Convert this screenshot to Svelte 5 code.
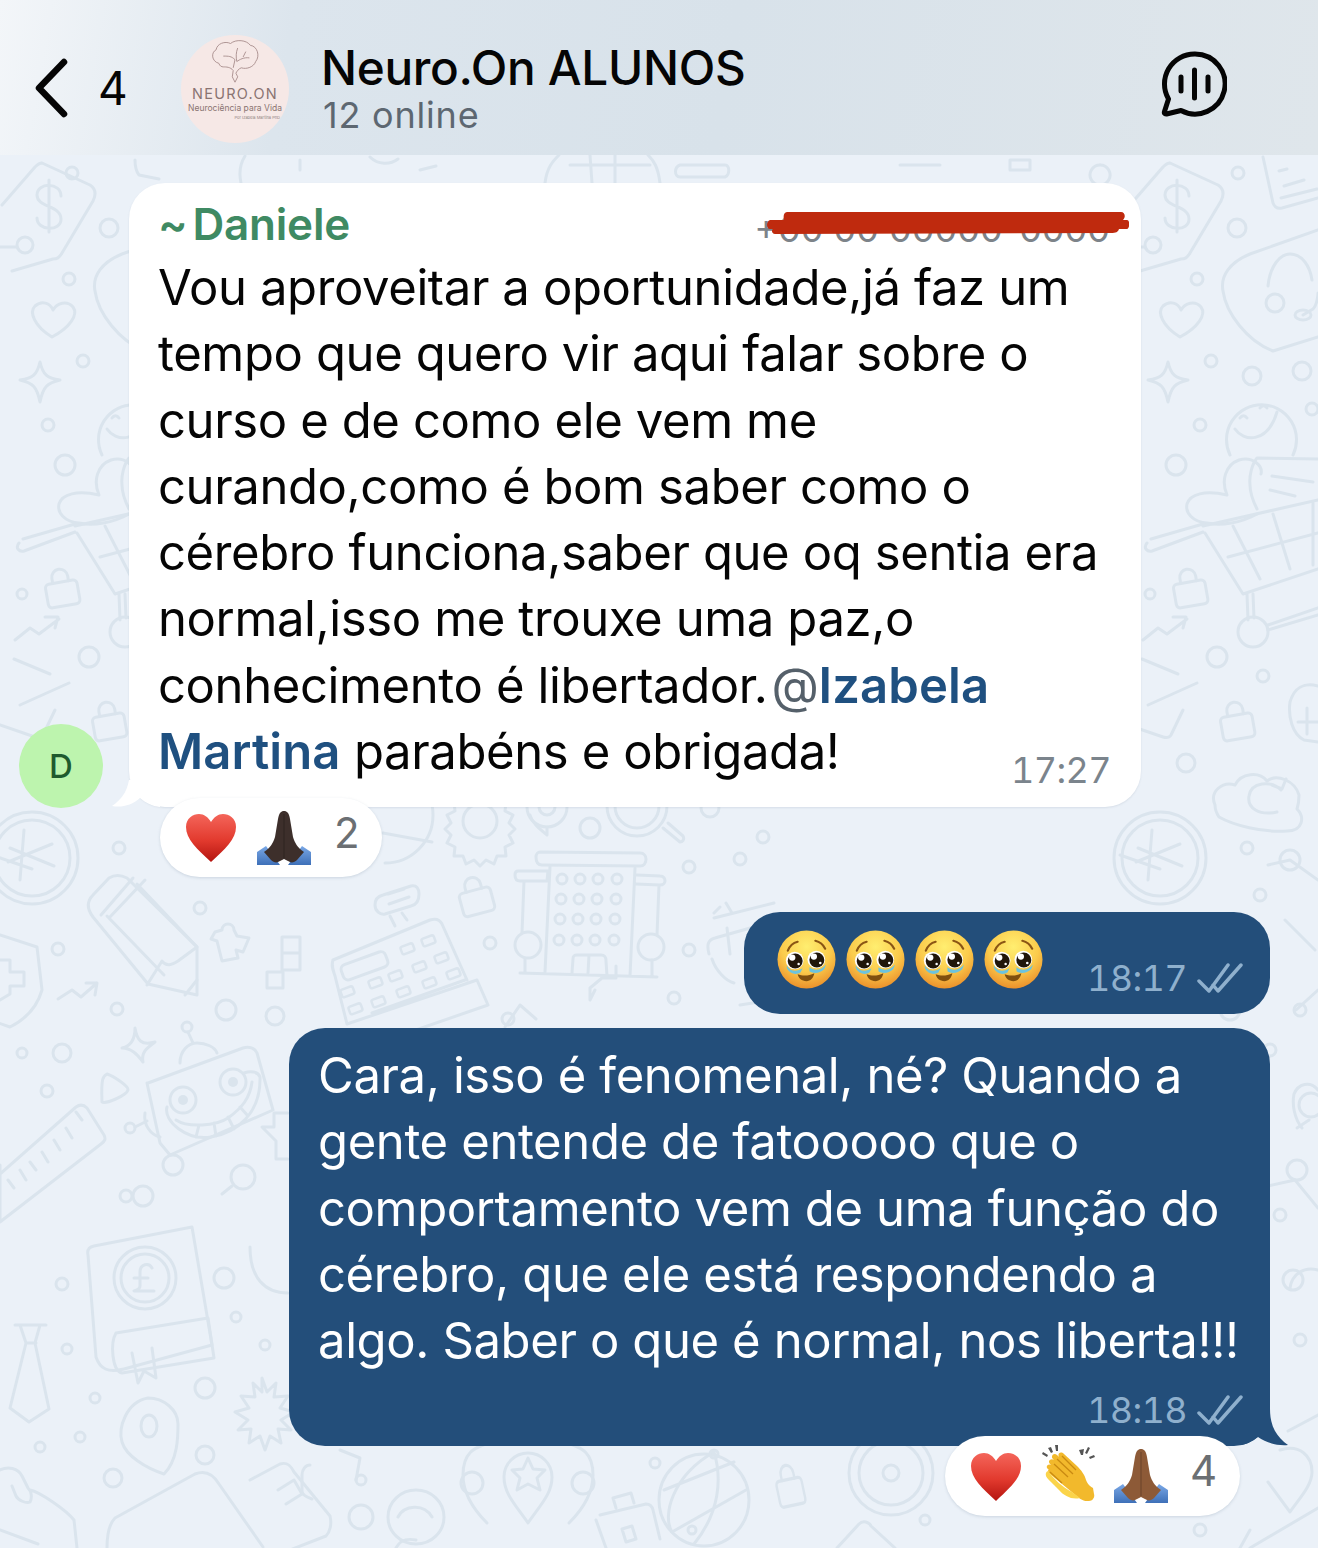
<script>
  const rings = [
    [72,173,6],[109,228,9],[69,279,6],[83,361,6],[48,425,6],[65,465,10],[22,594,5],[89,657,10],
    [119,848,6],[200,908,6],[58,949,6],[117,1009,6],[226,1010,10],[275,1016,9],[62,1053,9],
    [22,1053,5],[47,1091,6],[126,1196,6],[224,1278,10],[62,1284,6],[143,1196,10],
    [590,828,10],[710,808,9],[763,837,6],[740,859,6],[689,867,6],[490,943,6],[689,950,6],[674,998,6],
    [508,1019,6],[40,1447,5],[80,1437,5],[113,1478,9],[205,1455,9],[361,1480,5],[361,1517,12],[655,1463,5],
    [205,1388,10],[95,1398,5],[67,1349,5],[265,1345,5],[236,1317,5],[925,1520,5],
    [1238,173,6],[1237,228,9],[1197,279,6],[1211,361,6],[1252,376,9],[1302,371,9],[1312,409,6],
    [1200,425,6],[1176,465,10],[1150,594,5],[1217,657,10],[1263,676,6],[1186,763,9],[1247,848,6],
    [1290,860,10],[1260,895,6],[1208,940,9],[1230,1010,10],[1300,1010,6],[1270,1050,6],[1240,1116,6],
    [1297,1170,10],[1280,1215,6],[1293,1280,10],[1300,1340,6],[1200,1530,6]
  ];
  const cols = [562,580,598,617];
  const winRows = [879,899,919,940];
  const keys = [[347,992],[375,983],[395,976],[419,967],[441,958],[355,1009],[378,1002],[403,992],[429,983],[453,974],[407,949],[428,941]];
</script>

<div class="page">
  <header class="top">
    <svg class="chev" viewBox="0 0 36 60" aria-hidden="true">
      <path d="M31 4 6 30l25 26" />
    </svg>
    <span class="count">4</span>
    <div class="logo">
      <svg class="brain" viewBox="0 0 60 50" aria-hidden="true">
        <path d="M12 27C4 25 3 15 9 12 10 5 19 2 25 5c6-5 18-4 22 2 8 1 11 12 6 18-2 6-10 9-16 7-3 1-5 4-6 6l2 4-3 6-3-6 1-7c-3-4-8-4-11-4-2 0-4-1-5-4Z" />
        <path d="M17 19c6 0 9 0 13 4M33 10c-2 5-2 10-1 15 3-2 8-5 14-4M30 23l-2 9M42 14l-3 6" />
      </svg>
      <span class="l1">NEURO.ON</span>
      <span class="l2">Neurociência para Vida</span>
      <span class="l3">Por Izabela Martina PhD</span>
    </div>
    <div class="titles">
      <div class="title">Neuro.On ALUNOS</div>
      <div class="sub">12 online</div>
    </div>
    <svg class="voice" viewBox="0 0 66 66" aria-hidden="true">
      <path d="M34 3a30 30 0 1 1-14 56.500L5.500 63c-2 .2-2.500-1-2-2.500L7.500 48A30 30 0 0 1 34 3Z" />
      <path d="M33.500 19v28M20 26v14M47 26v14" />
    </svg>
  </header>

  <main class="chat">
    <svg class="doodles" viewBox="0 155 1318 1393" aria-hidden="true">
      <defs>
        <g id="lock">
          <rect x="-16" y="-8" width="32" height="24" rx="4" />
          <path d="M-8-8v-5a8 8 0 0 1 16 0v5" />
        </g>
        <path id="star4" d="M0-19C3-6 7-3 20-1 7 2 3 6 0 21-3 6-7 2-20-1-7-3-3-6 0-19Z" />
        <path id="pin" d="M0 38C-14 18-24 8-24-8a24 24 0 0 1 48 0C24 8 14 18 0 38Z" />
        <g id="rt">
          <path d="M1170 163l48 22c6 4 6 10 3 16l-31 52c-3 5-5 6-9 6l-41 12M1130 205l33-38c3-3 5-4 7-4" />
          <path d="M1177 180v52M1189 196c0-14-24-14-24-1 0 13 24 10 24 24 0 13-24 12-24-1" />
          <circle cx="1153" cy="245" r="8" /><path d="M1145 247h-17" />
          <path d="M1180 337c-18-11-23-25-17-31 7-6 15-3 18 4 4-7 14-10 20-3 6 8-4 21-21 30Z" />
          <use href="#star4" x="1168" y="381" />
          <use href="#lock" transform="translate(1190 590) rotate(-10)" />
          <path d="M1143 640l15-12 9 6 20-15M1173 617h13l-3 11" />
          <path d="M1142 659l36 15M1148 705l49-22M1183 710l-12 25c-2 3-5 3-8 2l-35-12" />
          <use href="#lock" transform="translate(1237 723) rotate(-10)" />
          <path d="M1318 230l-68 24c-20 8-30 22-27 37 3 22 24 50 50 60l45-14" />
          <path d="M1268 286c2-20 12-32 22-32 12 0 20 12 22 26M1303 315l10-6c4-4 5-14 5-16" />
          <circle cx="1275" cy="303" r="9" /><ellipse cx="1303" cy="315" rx="8" ry="5" />
          <path d="M1230 455a35 35 0 1 1 63 0" />
          <path d="M1240 418c2-3 5-3 7 0M1260 408c2-3 5-3 7 0M1235 429c8 12 32 16 42-17" />
          <path d="M1207 523c-14-1-22-10-20-19 3-10 18-14 40-9-6-14-2-30 12-35 14-4 24 6 22 14M1207 523c14 3 34 0 50-9" />
          <path d="M1318 459l-61-1c-5 6-8 18-7 27 0 10 4 18 7 24M1272 476l41 6M1270 490l25 6" />
          <path d="M1147 543c-4 5 0 9 5 8l51-19M1203 524l-52 15M1203 526l115-26M1205 533l38 61 75-25M1233 526l27 53M1273 514l17 55M1228 557l90-24M1313 502v63M1247 594l1 26M1253 594l1 24M1268 625l50-17M1268 630l50-15" />
          <circle cx="1253" cy="632" r="15" />
          <path d="M1160 858m-46 0a46 46 0 1 0 92 0 46 46 0 1 0-92 0M1160 858m-38 0a38 38 0 1 0 76 0 38 38 0 1 0-76 0M1138 848l44 18M1136 862l44-18M1152 830l-4 50M1120 855l40 14" />
        </g>
      </defs>

      <use href="#rt" />
      <use href="#rt" x="-1128" />

      {#each rings as r}
        <circle cx={r[0]} cy={r[1]} r={r[2]} />
      {/each}

      <path d="M1263 157l10 46c2 5 5 6 9 5l36-10M1279 171l8-2M1284 186l20-6M1281 198l36-9" />
      <path d="M1318 686c-14-4-24 2-28 16-2 14 2 32 14 38l14 2M1298 722h20M1307 708v26" />
      <path d="M1215 805c-6-14 8-24 20-20 6-12 24-14 32-4 10-8 28 0 32 14 0 8-2 14-2 14 8 8 6 22-10 22-24 2-54-6-68-14-2-3-4-6-4-12Z" />
      <path d="M1281 790c-10-10-30-8-32 6-2 12 10 20 28 16M1272 785l10 4 4-10" />

      <path d="M127 878c-6-3-13-3-18 0L93 895c-7 7-6 14 0 22L148 984l49 11V947Z" />
      <path d="M101 915l32-37M109 918l36-38M147 985l15-24c4 6 10 4 16 0l19-14M107 916 164 975M137 884 197 947M185 995l12-15" />
      <path d="M0 935l37 12 5 43c-4 14-14 28-32 37L-10 1020M0 960h10v12h14v14H10v8L0 1000" />
      <path d="M58 999l14-9 9 7 16-14M86 983h11l-2 12" />
      <path d="M222 930c0-8 12-8 12 0l3 6 12 2-6 14-7-2 2 8-16 3-5-20-6-2 4-7Z" />
      <path d="M282 937h18v33h-18zM282 953h18M267 972h16v16h-16z" />
      <path d="M333 960l97-40c6-2 10 0 12 4l25 56M333 960c-2 6 0 10 2 16l12 48M477 980l-130 44M477 980l11 25-130 45M372 1013l93-33" />
      <rect x="341" y="958" width="47" height="16" rx="5" transform="rotate(-20 364 966)" />
      <path d="M375 905c0-6 4-9 8-10l28-9c6-1 8 3 8 8 0 7-3 11-8 12l-26 8c-5 1-10-3-10-9ZM389 904l20-7M388 894l16-5M390 916l5 10M402 913l5 7" />
      <g class="thin">
        {#each keys as k}<rect x={k[0]-6} y={k[1]-4} width="13" height="8" rx="2" transform="rotate(-20 {k[0]} {k[1]})" />{/each}
      </g>

      <path d="M148 1083l95-35c6-2 12 0 14 5l16 57-103 45-10-12-13-60Z" />
      <circle cx="183" cy="1100" r="13" /><circle cx="233" cy="1082" r="13" />
      <circle class="solid" cx="183" cy="1100" r="5" /><circle class="solid" cx="233" cy="1082" r="5" />
      <path d="M167 1107c-4 14 20 34 44 30 26-4 50-24 49-60-2-6-10-6-16-4M176 1120c12 8 40 6 52-2 14-10 22-20 24-36M199 1125l-3 12M214 1123l2 13M228 1117l6 12M240 1107l8 9" />
      <path d="M180 1063c0-12 8-20 17-20s18 4 20 10M188 1032l5 11" />
      <circle cx="187" cy="1027" r="5" />
      <path d="M145 1113c-2 12 6 22 15 24M135 1127l12-6" />
      <circle cx="173" cy="1165" r="10" /><circle cx="130" cy="1128" r="5" />
      <path d="M288 1113h-14v14h-12l14 14v18h12M250 1247c0 30 14 46 38 46" />
      <circle cx="243" cy="1177" r="12" /><path d="M232 1186l-10 8" />
      <path d="M0 1165v57M0 1174l76-67c4-3 8-2 11 1l17 27c2 4 1 6-3 9L0 1222M8 1180l6 8M20 1170l6 10M30 1162l6 8M42 1152l6 10M54 1140l6 10M66 1128l6 10M76 1112l6 8" />
      <path d="M135 1028c2 12 6 18 20 14-8 6-14 10-12 20-6-8-12-14-21-14 9-2 13-10 13-20Z" />
      <path d="M107 1074c-4 2-6 4-5 28 4 2 24-6 26-12 1-4-15-14-21-16Z" />

      <path d="M88 1255c-1-5 1-8 6-9l98-19 20 118-88 24c-16 4-24 0-28-12Z" />
      <circle cx="145" cy="1278" r="31" /><circle cx="145" cy="1278" r="24" />
      <path d="M152 1268c-3-6-12-4-12 4v14c0 2-2 4-6 5h20M134 1278h14" />
      <path d="M15 1325h31M20 1325l6 18-16 65 19 14 20-13-14-66 5-18M26 1343h10" />
      <path d="M116 1333l92-15M214 1358l-92 15M208 1318l6 40M122 1373c-10-2-12-30-6-40M132 1353l6 30 6-12 12 7-4-30" />
      <path d="M148 1398c-22 4-30 30-26 44 4 14 24 26 42 32 14-14 14-38 14-50 0-14-14-26-30-26Z" />
      <ellipse cx="149" cy="1426" rx="8" ry="11" />
      <path d="M262 1378l5 14 9-9-2 14 14-1-8 12 14 4-13 8 10 10-13-1 3 14-11-7-5 14-5-14-11 7 2-14-13 1 10-10-13-8 14-4-8-12 14 1-2-14 9 9Z" />

      <path d="M310 1465c-4 0-8 4-8 10v16c0 4 4 6 10 8M340 1450l20 8-4 22" />
      <path d="M107 1548c0-12 2-24 8-30l80-44c10-4 18 0 24 10l44 63" />
      <path d="M250 1480l30-16c6-2 10 0 14 8l36 44c2 8 0 16-4 20l-36 14M278 1490l16-10 8 14-16 10" />
      <path d="M0 1470c8-4 18-2 22 6l6 12c4 4 4 10 2 14-4 2-12-2-14-6l-4-10M30 1490c10 2 36 20 44 30l3 28M0 1530l38 14" />
      <ellipse cx="416" cy="1517" rx="28" ry="27" /><path d="M398 1517c6-12 26-14 34 0M396 1548c4-8 10-10 20-8" />
      <g transform="translate(487 1480)"><path d="M0 43c-10-10-24-28-24-48 0-28 18-28 30-34" /></g>
      <g transform="translate(569 1480)"><path d="M0 43c10-10 24-28 24-48 0-28-18-28-30-34" /></g>
      <use href="#pin" x="528" y="1485" />
      <path d="M528 1458l5 11 12 1-8 8 3 12-12-6-11 6 3-12-8-8 11-1Z" />
      <circle cx="472" cy="1483" r="11" /><circle cx="583" cy="1483" r="11" />
      <path d="M600 1515l46-11c4 0 6 2 7 6l7 29M596 1520l10 28M616 1508l-3-10 18-5 3 10M622 1529l10-3 4 13-10 3Z" />
      <ellipse cx="704" cy="1500" rx="45" ry="46" />
      <path d="M672 1532c-10-16 0-56 42-80M714 1452c8 26 6 60-20 92M664 1490l70-28M672 1532l74-42" />
      <circle cx="714" cy="1454" r="4" /><circle cx="692" cy="1530" r="4" />
      <use href="#lock" transform="translate(790 1488) rotate(-12) scale(.8 1.1)" />
      <circle cx="891" cy="1473" r="42" /><circle cx="891" cy="1473" r="32" /><circle cx="891" cy="1473" r="8" />
      <path d="M837 1548l22-24c4-4 10-2 12 2l24 22" />

      <path d="M385 767a48 48 0 0 1 0 96M383 833l49 9" />
      <circle cx="480" cy="821" r="17" />
      <path d="M480 792l6 6 8-4 3 8 9 0-1 9 8 4-4 8 6 6-6 6 4 8-8 4 1 9-9 0-3 8-8-4-6 6-6-6-8 4-3-8-9 0 1-9-8-4 4-8-6-6 6-6-4-8 8-4-1-9 9 0 3-8 8 4Z" />
      <circle cx="547" cy="807" r="20" /><circle cx="547" cy="807" r="8" />
      <path d="M530 815c2 8 10 14 17 20v-8" />
      <circle cx="637" cy="806" r="30" /><circle cx="637" cy="806" r="22" />
      <path d="M663 828l17 14c2 0 5-2 3-6l-15-13" />
      <use href="#lock" transform="translate(476 898) rotate(-15)" />
      <path d="M540 852c-2 0-4 2-4 5 0 5 2 8 6 8l98 1c4 0 6-3 6-7 0-3-2-6-6-6Z" />
      <path d="M550 867l-5 105M635 868l-5 108M518 871c-2 0-3 2-3 4 0 4 2 6 5 6h27l1-10ZM637 875l23 1c4 0 5 3 5 5s-2 4-5 4l-24-1M524 881l-2 52M659 885l-2 50M520 973l137 4M572 973l1-14c0-4 2-4 4-4h24c4 0 5 2 5 6l1 15M589 955l-1 18M525 958v15M652 960v17" />
      <circle cx="528" cy="945" r="13" /><circle cx="651" cy="947" r="13" />
      {#each winRows as y, ri}
        {#each cols as x}
          <circle cx={x - ri} cy={y} r="5" />
        {/each}
      {/each}
      <path d="M709 954c-2-8-2-14 6-16l60-17M720 907l-6 6M726 903l6 10M714 918l60-15M730 954l-3-26M712 959c4 12 14 22 22 24" />
      <path d="M595 990l-5 10v-12l12-10h14v-12M505 1027l15-22 16 14" />
      <path d="M740 1005l90-14" />

      <path d="M1318 880l-28-20-22 5M1285 920l30 30M1318 990l-22 20" />
      <path d="M1318 1090c-8-10-20-6-24 4-2 10 0 24 8 34" />
      <circle cx="1311" cy="1105" r="12" /><path d="M1297 1128l12-8" />
      <path d="M1250 1190l45-10 23 28M1318 1270c-14-4-26 4-28 18" />
      <path d="M1280 1450c20-6 32 6 32 22 0 14-14 28-22 40l-22-30M1318 1415l-30 16" />
      <path d="M1250 1548l68-40M1250 1530l-10 18" />

      <path d="M300 160v10M570 165h80M590 155l2 28M615 155l0 28M545 183c2-16 8-22 14-28M660 183c-2-16-6-22-12-28M680 165h45c5 0 5 10 0 12h-45c-6 0-6-10 0-12Z" />
      <path d="M135 160c0 5 0 10 4 15l20 4M245 156c-5 8-6 18-4 27M370 157c8 8 20 8 28 2M420 170l16-4" />
      <path d="M900 165l40 0M1010 160h20v10h-20ZM1100 165a10 10 0 1 0 .1 0" />
    </svg>

    <div class="row-in">
      <div class="avatar">D</div>
      <div class="bubble in">
        <svg class="tail tail-in" viewBox="0 0 50 27" aria-hidden="true"><path d="M19 0C17 12 11 20 2 26c10 2 20-1 28-8 6 5 12 8 20 9V0Z" /></svg>
        <div class="sender">
          <span class="name"><span class="tilde">~</span>Daniele</span>
          <span class="phone">+00 00 00000-0000</span>
          <svg class="scribble" viewBox="0 0 362 22" aria-hidden="true">
            <path d="M20 0h334c4 0 5 5 2 8h4c3 0 3 8 0 9h-8c-1 3-3 4-8 4L8 22c-3 0-4-4-2-5H3c-4 0-4-8 0-9h14c-1-4 0-8 3-8Z" />
          </svg>
        </div>
        <p class="msg">Vou aproveitar a oportunidade,já faz um<br />tempo que quero vir aqui falar sobre o<br />curso e de como ele vem me<br />curando,como é bom saber como o<br />cérebro funciona,saber que oq sentia era<br />normal,isso me trouxe uma paz,o<br />conhecimento é libertador.<span class="at">@</span><span class="mention">Izabela<br />Martina</span> parabéns e obrigada!</p>
        <span class="time time-in">17:27</span>
      </div>
    </div>

    <div class="react react-a">
      <svg class="ico heart" viewBox="0 0 52 50" aria-hidden="true"><use href="#e-heart" /></svg>
      <svg class="ico pray dark" viewBox="0 0 54 54" aria-hidden="true"><use href="#e-pray" /></svg>
      <span class="num">2</span>
    </div>

    <div class="bubble out short">
      <div class="faces">
        <svg class="face" viewBox="0 0 60 60" aria-hidden="true"><use href="#e-face" /></svg>
        <svg class="face" viewBox="0 0 60 60" aria-hidden="true"><use href="#e-face" /></svg>
        <svg class="face" viewBox="0 0 60 60" aria-hidden="true"><use href="#e-face" /></svg>
        <svg class="face" viewBox="0 0 60 60" aria-hidden="true"><use href="#e-face" /></svg>
      </div>
      <div class="stamp">
        <span class="time">18:17</span>
        <svg class="ticks" viewBox="0 0 46 30" aria-hidden="true"><path d="M2 18l10 10L31 2M16 22l5 6L44 2" /></svg>
      </div>
    </div>

    <div class="bubble out long">
      <svg class="tail tail-out" viewBox="0 0 50 37" aria-hidden="true"><path d="M30 0c0 18 7 28 18 36-10 1-22-2-30-8-6 4-12 8-18 8V0Z" /></svg>
      <p class="msg">Cara, isso é fenomenal, né? Quando a<br />gente entende de fatooooo que o<br />comportamento vem de uma função do<br />cérebro, que ele está respondendo a<br />algo. Saber o que é normal, nos liberta!!!</p>
      <div class="stamp">
        <span class="time">18:18</span>
        <svg class="ticks" viewBox="0 0 46 30" aria-hidden="true"><path d="M2 18l10 10L31 2M16 22l5 6L44 2" /></svg>
      </div>
    </div>

    <div class="react react-b">
      <svg class="ico heart" viewBox="0 0 52 50" aria-hidden="true"><use href="#e-heart" /></svg>
      <svg class="ico clap" viewBox="0 0 54 56" aria-hidden="true"><use href="#e-clap" /></svg>
      <svg class="ico pray mid" viewBox="0 0 54 54" aria-hidden="true"><use href="#e-pray" /></svg>
      <span class="num">4</span>
    </div>
  </main>

  <svg class="emoji-defs" width="0" height="0" aria-hidden="true">
    <defs>
      <linearGradient id="g-heart" x1="0" y1="0" x2="0" y2="1">
        <stop offset="0" stop-color="#f4655a" /><stop offset=".55" stop-color="#e23a2e" /><stop offset="1" stop-color="#b4140f" />
      </linearGradient>
      <linearGradient id="g-cuff" x1="0" y1="0" x2="0" y2="1">
        <stop offset="0" stop-color="#7aa8e6" /><stop offset="1" stop-color="#3e70b8" />
      </linearGradient>
      <radialGradient id="g-face" cx=".5" cy=".28" r=".78">
        <stop offset="0" stop-color="#ffee70" /><stop offset=".55" stop-color="#fbcb4c" /><stop offset="1" stop-color="#e88524" />
      </radialGradient>
      <g id="e-heart">
        <path fill="url(#g-heart)" d="M26 49C12 36 1 26 1 14 1 5 8 1 14 1c5 0 9 3 12 8 3-5 7-8 12-8 6 0 13 4 13 13 0 12-11 22-25 35Z" />
      </g>
      <g id="e-pray">
        <path fill="url(#g-cuff)" d="M0 54V41l9-6 9 12 5 7ZM54 54V41l-9-6-9 12-5 7Z" />
        <path class="skin" d="M27 0c-3 0-5 2-6 8l-3 18c-2 6-4 10-11 15l7 8c2 2 5 3 7 2l6-3 6 3c2 1 5 0 7-2l7-8c-7-5-9-9-11-15l-3-18c-1-6-3-8-6-8Z" />
        <path fill="none" stroke="#00000040" stroke-width="1" d="M27 3v44" />
      </g>
      <g id="e-clap">
        <path fill="#f2b92c" d="M6 24c-3-2 0-6 3-4l-1-1c-3-3 1-6 4-4l-1-1c-3-3 1-7 4-4l2 2c-2-4 2-6 5-3l13 12c4 4 8 9 9 14 2 5 5 7 7 8l1 6c1 3-1 7-5 7-3 1-7-1-10-3L8 29c-3-2-2-6 0-5Z" />
        <path fill="#fbd44a" d="M6 26c6 8 14 16 24 21l8 6c-8 2-16-2-21-8L6 34c-3-3-3-7 0-8Z" />
        <path fill="none" stroke="#c98a12" stroke-width="1.300" d="M12 19l14 13M15 14l16 15M20 11l14 14M8 27l12 11" />
        <path fill="#555" d="M6 3l3-1 2 5-2 1ZM13 0h3v6h-2ZM0 9l1-2 5 3-1 2ZM37 5l5-1-1 6-2 0ZM46 2l2 1-3 6-2-1ZM47 12l5-2 1 2-5 2Z" />
      </g>
      <g id="e-face">
        <circle cx="30" cy="30" r="29.500" fill="url(#g-face)" />
        <path fill="none" stroke="#8a5514" stroke-width="2.200" stroke-linecap="round" d="M11 21c2-5 6-8 10-9M49 19c-2-4-6-7-10-8" />
        <path fill="#6cc3de" d="M10 36c3 6 10 7 16 3l-2 4c-4 3-11 2-14-4ZM33 38c5 4 12 3 17-3l-2 5c-4 4-11 5-15 2Z" />
        <circle cx="18" cy="31" r="9" fill="#fff" /><circle cx="40" cy="30" r="9" fill="#fff" />
        <circle cx="18.500" cy="31.500" r="7.600" fill="#21160a" /><circle cx="40.500" cy="30.500" r="7.600" fill="#21160a" />
        <circle cx="15.500" cy="28" r="3.200" fill="#fff" /><circle cx="37.500" cy="27" r="3.200" fill="#fff" />
        <circle cx="22" cy="34.500" r="1.300" fill="#fff" /><circle cx="44" cy="33.500" r="1.300" fill="#fff" />
        <path fill="#80500f" d="M21 45c5 2 11 2 17-1-1 5-4 8-8 8-5 0-8-3-9-7Z" />
      </g>
    </defs>
  </svg>
</div>

<style>
  :global(body) { margin: 0; background: #ebf1f8; }
  .page {
    position: relative;
    width: 1318px;
    height: 1548px;
    overflow: hidden;
    font-family: Inter, "Liberation Sans", sans-serif;
    color: #050505;
  }

  .top {
    display: flex;
    align-items: center;
    height: 155px;
    padding-left: 33px;
    box-sizing: border-box;
    background: linear-gradient(100deg, #f3f6f9 0%, #dce5ed 22%, #d8e2ea 55%, #dfe6eb 100%);
  }
  .chev { width: 36px; height: 60px; margin-top: 20px; fill: none; stroke: #050505; stroke-width: 6.500; stroke-linecap: round; stroke-linejoin: round; flex: none; }
  .count { margin: 20px 0 0 29px; width: 83px; font-size: 46px; font-weight: 400; flex: none; }
  .logo {
    width: 108px;
    height: 108px;
    margin-top: 22px;
    border-radius: 50%;
    background: #f6e8e6;
    display: flex;
    flex-direction: column;
    align-items: center;
    color: #8f7f7f;
    flex: none;
    margin-right: 32px;
  }
  .brain { width: 54px; height: 45px; margin-top: 4px; fill: none; stroke: #a78c8b; stroke-width: 1; }
  .l1 { font-size: 14.500px; letter-spacing: 1.300px; line-height: 16px; margin-top: 2px; color: #8a7472; }
  .l2 { font-size: 8.500px; line-height: 12px; color: #8a7472; white-space: nowrap; }
  .l3 { font-size: 4px; line-height: 7px; align-self: flex-end; margin-right: 9px; white-space: nowrap; }
  .titles { display: flex; flex-direction: column; margin-top: 32px; }
  .title { font-size: 47.700px; font-weight: 500; line-height: 52px; letter-spacing: -.3px; margin-top: -9px; white-space: nowrap; }
  .sub { font-size: 36px; line-height: 42px; color: #5d6771; letter-spacing: .8px; margin-left: 2px; }
  .voice {
    position: absolute;
    left: 1161px;
    top: 51px;
    width: 66px;
    height: 66px;
    fill: none;
    stroke: #050505;
    stroke-width: 5;
    stroke-linecap: round;
    stroke-linejoin: round;
  }

  .chat {
    position: relative;
    height: 1393px;
    box-sizing: border-box;
    padding-top: 28px;
    display: flex;
    flex-direction: column;
    background: #ebf1f8;
  }
  .doodles {
    position: absolute;
    inset: 0;
    width: 1318px;
    height: 1393px;
    fill: none;
    stroke: #dae4ed;
    stroke-width: 3;
    stroke-linecap: round;
    stroke-linejoin: round;
  }
  .thin { stroke-width: 2.500; }
  .solid { fill: #dae4ed; stroke: none; }

  .row-in {
    position: relative;
    display: flex;
    align-items: flex-end;
    gap: 26px;
    padding-left: 19px;
  }
  .avatar {
    width: 84px;
    height: 84px;
    margin-bottom: -1px;
    border-radius: 50%;
    background: #bdf4ae;
    color: #1f5a2e;
    font-size: 33px;
    font-weight: 500;
    display: flex;
    align-items: center;
    justify-content: center;
    flex: none;
  }
  .bubble { position: relative; box-sizing: border-box; border-radius: 36px; }
  .in {
    width: 1012px;
    height: 624px;
    padding: 15px 30px 0 29px;
    background: #fff;
    box-shadow: 0 1px 2px rgba(120, 140, 160, .18);
  }
  .tail { position: absolute; }
  .tail-in { left: -19px; bottom: 0; width: 50px; height: 27px; fill: #fff; }
  .sender { position: relative; display: flex; justify-content: space-between; height: 52px; }
  .name { font-size: 44px; font-weight: 600; line-height: 52px; color: #3f8a63; letter-spacing: -.2px; }
  .tilde { margin-right: 5px; }
  .phone { font-size: 36px; line-height: 62px; color: #7d8389; white-space: nowrap; margin-right: 1px; }
  .scribble { position: absolute; right: -18px; top: 14px; width: 362px; height: 22px; fill: #bf2a0e; }
  .msg { margin: 0; font-size: 49px; line-height: 66.300px; letter-spacing: -.38px; white-space: nowrap; }
  .in .msg { margin-top: 5px; }
  .at { color: #55606a; margin-left: 4px; }
  .mention { color: #1f5080; font-weight: 600; letter-spacing: .1px; }
  .time { font-size: 36px; letter-spacing: -.6px; line-height: 44px; font-variant-numeric: tabular-nums; }
  .time-in { position: absolute; right: 30px; bottom: 15px; color: #7b848c; }

  .react {
    position: relative;
    box-sizing: border-box;
    display: flex;
    align-items: center;
    background: #fff;
    border-radius: 40px;
    box-shadow: 0 1px 3px rgba(130, 150, 170, .3);
  }
  .react-a { width: 222px; height: 79px; margin: -9px 0 0 160px; padding-left: 25px; }
  .react-b { width: 295px; height: 80px; margin: -10px 78px 0 0; padding-left: 25px; align-self: flex-end; }
  .ico { flex: none; }
  .heart { width: 52px; height: 50px; }
  .pray { width: 54px; height: 54px; margin-left: 20px; }
  .clap { width: 54px; height: 56px; margin-left: 20px; margin-top: -6px; }
  .num { margin-left: 23px; font-size: 42px; line-height: 50px; color: #6b6f73; margin-top: -10px; }
  .react-b .heart { margin-top: 2px; }
  .react-b .pray { margin-left: 18px; }
  .react-b .num { margin-left: 22px; }
  .dark { --skin: #3d2f2b; }
  .mid { --skin: #8d5a37; }
  :global(.skin) { fill: var(--skin); }

  .out { align-self: flex-end; margin-right: 48px; background: #234e7a; color: #fff; }
  .short { width: 526px; height: 102px; margin-top: 35px; display: flex; }
  .long { width: 981px; height: 418px; margin-top: 14px; padding: 15px 0 0 29px; }
  .faces { display: flex; gap: 10px; padding: 18px 0 0 33px; }
  .face { width: 59px; height: 59px; }
  .stamp { position: absolute; right: 27px; bottom: 14px; display: flex; align-items: center; color: #8fb0cd; }
  .stamp .time { margin-right: 10px; }
  .ticks { width: 46px; height: 30px; fill: none; stroke: #8fb0cd; stroke-width: 3.500; stroke-linecap: round; stroke-linejoin: round; }
  .tail-out { right: -20px; bottom: 0; width: 50px; height: 37px; fill: #234e7a; }
  .emoji-defs { position: absolute; }
</style>
